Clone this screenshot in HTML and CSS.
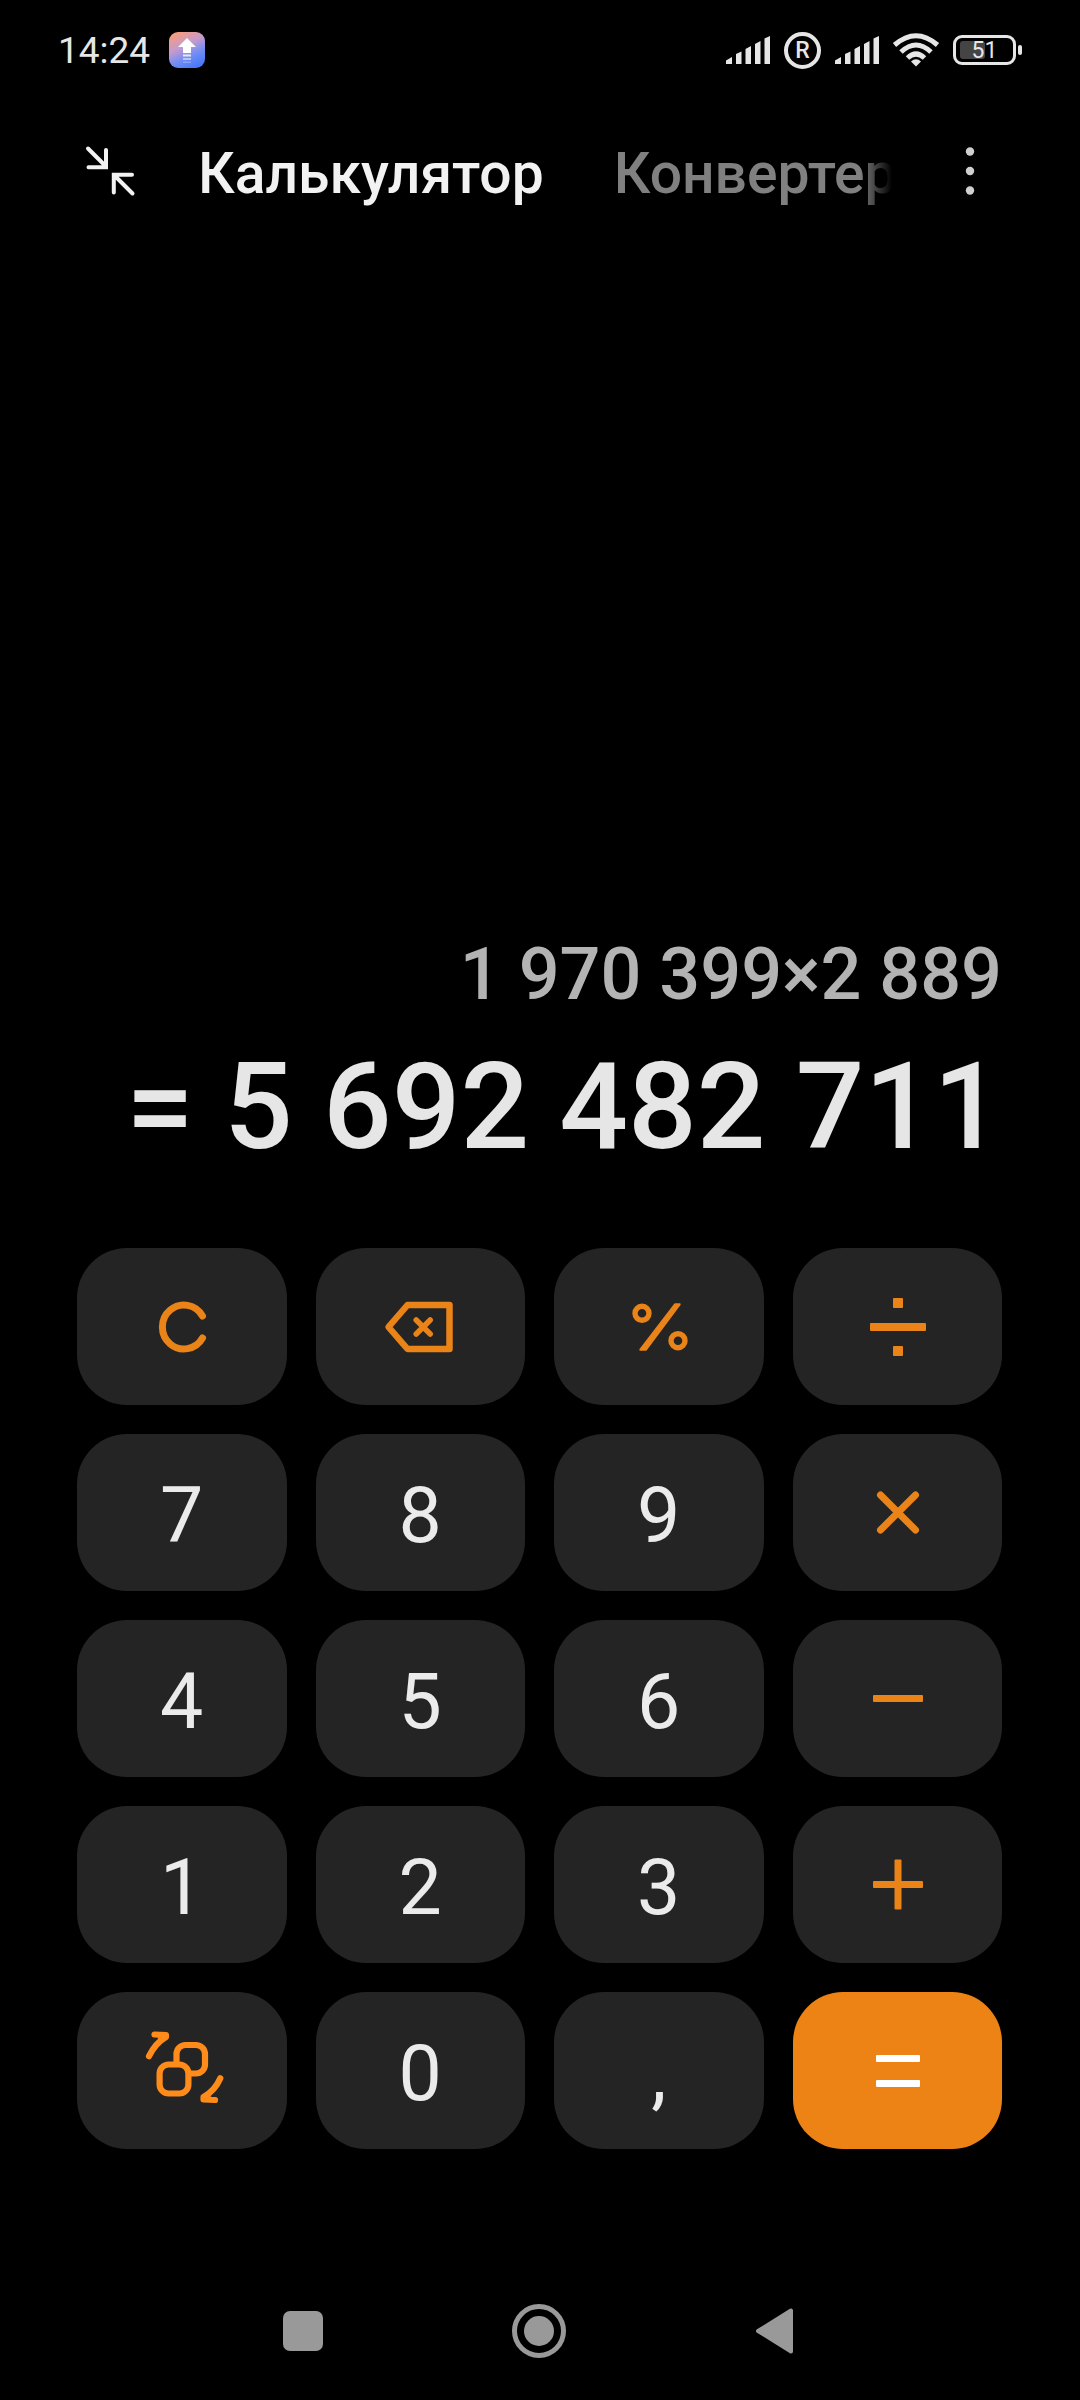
FILE: index.html
```html
<!DOCTYPE html>
<html lang="ru">

<head>
    <meta charset="UTF-8">
    <meta name="viewport" content="width=device-width, initial-scale=1">
    <title>Калькулятор</title>
    <link rel="stylesheet" href="styles.css">
</head>

<body>

    <div class="status-bar">
        <span class="clock">14:24</span>
        <svg class="app-badge" width="36" height="36" viewBox="0 0 36 36">
            <defs>
                <linearGradient id="badge" x1="0.2" y1="0" x2="0.7" y2="1">
                    <stop offset="0" stop-color="#fb9d78" />
                    <stop offset="0.4" stop-color="#c49ad0" />
                    <stop offset="0.7" stop-color="#6f8df5" />
                    <stop offset="1" stop-color="#4a78f8" />
                </linearGradient>
            </defs>
            <rect width="36" height="36" rx="9" fill="url(#badge)" />
            <path d="M18 6L27 15H22V21H14V15H9Z" fill="#fff" />
            <path d="M14 22.500h8v2h-8z" fill="#fff" opacity="0.8" />
            <path d="M14 26h8v2h-8z" fill="#fff" opacity="0.5" />
            <path d="M14 29.500h8v1.500h-8z" fill="#fff" opacity="0.25" />
        </svg>
        <div class="status-icons">
            <svg width="44" height="28" viewBox="0 0 44 28" fill="#e6e6e6">
                <path d="M0 28V24.500L6 21V28ZM10 28V18L15.500 15.500V28ZM19.500 28V13L25 10V28ZM29 28V8L34.500 5V28ZM38.500 28V2.500L44 0V28Z" />
            </svg>
            <span class="roaming">R</span>
            <svg width="44" height="28" viewBox="0 0 44 28" fill="#e6e6e6">
                <path d="M0 28V24.500L6 21V28ZM10 28V18L15.500 15.500V28ZM19.500 28V13L25 10V28ZM29 28V8L34.500 5V28ZM38.500 28V2.500L44 0V28Z" />
            </svg>
            <svg width="46" height="34" viewBox="0 0 46 34" fill="none" stroke="#e6e6e6" stroke-width="5">
                <path d="M1.500 12Q23 -6.500 44.500 12" />
                <path d="M8 19Q23 5 38 19" />
                <path d="M14.500 25Q23 17 31.500 25" />
                <path d="M18 28.500Q23 24 28 28.500L23 33.500Z" fill="#e6e6e6" stroke="none" />
            </svg>
            <div class="battery">
                <div class="battery-body">
                    <div class="battery-level" style="width: 51%"></div>
                    <span class="battery-text">51</span>
                </div>
                <div class="battery-tip"></div>
            </div>
        </div>
    </div>

    <header class="header">
        <button class="icon-button" aria-label="Свернуть">
            <svg width="48" height="48" viewBox="0 0 48 48" fill="none" stroke="#f2f2f2" stroke-width="4" stroke-linecap="round">
                <path d="M2 1.500L20 19.500M20 3V20.200H2.500" />
                <path d="M46.500 46.500L28 28M46 27.800H27.800V45.500" />
            </svg>
        </button>
        <nav class="tabs">
            <button class="tab tab-active">Калькулятор</button>
            <button class="tab">Конвертер</button>
        </nav>
        <button class="icon-button" aria-label="Меню">
            <svg width="60" height="48" viewBox="0 0 60 48" fill="#d0d0d0">
                <circle cx="30" cy="4.500" r="4.200" />
                <circle cx="30" cy="24" r="4.200" />
                <circle cx="30" cy="43.500" r="4.200" />
            </svg>
        </button>
    </header>

    <main class="display">
        <div class="expression">1 970 399×2 889</div>
        <output class="result">= 5 692 482 711</output>
    </main>

    <div class="keypad">
        <button class="key" aria-label="Сброс">
            <svg class="key-icon" viewBox="0 0 80 80" fill="none" stroke="currentColor" stroke-width="7" stroke-linecap="round">
                <path d="M60.500 29A21.500 22 0 1 0 60.500 51" />
            </svg>
        </button>
        <button class="key" aria-label="Удалить">
            <svg class="key-icon" viewBox="0 0 80 80" fill="none" stroke="currentColor" stroke-width="6.500" stroke-linecap="round" stroke-linejoin="round">
                <path d="M8.500 40L27.500 18H69.500V62H27.500Z" />
                <path d="M36.200 33L50.200 47M50.200 33L36.200 47" stroke-width="5.500" />
            </svg>
        </button>
        <button class="key" aria-label="Процент">
            <svg class="key-icon" viewBox="0 0 80 80" fill="none" stroke="currentColor" stroke-width="5.400">
                <circle cx="23" cy="26.300" r="7" />
                <circle cx="59" cy="53.700" r="7" />
                <path d="M56 17.300H60.700L27 62.700H21.300Z" fill="currentColor" stroke-width="2" stroke-linejoin="round" />
            </svg>
        </button>
        <button class="key" aria-label="Разделить">
            <svg class="key-icon" viewBox="0 0 80 80" fill="currentColor">
                <rect x="36" y="11" width="10" height="10" rx="1" />
                <rect x="13" y="36" width="56" height="8" rx="1" />
                <rect x="36" y="59" width="10" height="10" rx="1" />
            </svg>
        </button>

        <button class="key key-digit">7</button>
        <button class="key key-digit">8</button>
        <button class="key key-digit">9</button>
        <button class="key" aria-label="Умножить">
            <svg class="key-icon" viewBox="0 0 80 80" fill="none" stroke="currentColor" stroke-width="7" stroke-linecap="round">
                <path d="M23.500 22L58.500 57M58.500 22L23.500 57" />
            </svg>
        </button>

        <button class="key key-digit">4</button>
        <button class="key key-digit">5</button>
        <button class="key key-digit">6</button>
        <button class="key" aria-label="Вычесть">
            <svg class="key-icon" viewBox="0 0 80 80" fill="currentColor">
                <rect x="16" y="36" width="50" height="7" rx="1" />
            </svg>
        </button>

        <button class="key key-digit">1</button>
        <button class="key key-digit">2</button>
        <button class="key key-digit">3</button>
        <button class="key" aria-label="Сложить">
            <svg class="key-icon" viewBox="0 0 80 80" fill="currentColor">
                <rect x="16" y="36" width="50" height="7" rx="1" />
                <rect x="37.500" y="14.500" width="7" height="50" rx="1" />
            </svg>
        </button>

        <button class="key" aria-label="Научный режим">
            <svg class="key-icon key-icon-bright" viewBox="0 0 80 80" fill="none" stroke="currentColor" stroke-width="6.200" stroke-linecap="round" stroke-linejoin="round">
                <rect x="34.500" y="14" width="28.500" height="28.500" rx="9" />
                <rect x="17.600" y="33.500" width="28.800" height="29" rx="9" fill="#242424" />
                <path d="M12.500 3.500L24 4V6C17 10 11 17 7 25.200M18 5L24 5" />
                <path d="M78.300 47.300C75 55 69 62 61.500 66V68.500L73 69M67 68L62 68" />
            </svg>
        </button>
        <button class="key key-digit">0</button>
        <button class="key key-digit">,</button>
        <button class="key key-equals" aria-label="Равно">
            <svg class="key-icon" viewBox="0 0 80 80" fill="currentColor">
                <rect x="19" y="24" width="44" height="7" rx="1" />
                <rect x="19" y="49" width="44" height="7" rx="1" />
            </svg>
        </button>
    </div>

    <footer class="nav-bar">
        <button class="icon-button" aria-label="Недавние">
            <svg width="54" height="54" viewBox="0 0 54 54" fill="#999">
                <rect x="7" y="7" width="40" height="40" rx="7" />
            </svg>
        </button>
        <button class="icon-button" aria-label="Домой">
            <svg width="54" height="54" viewBox="0 0 54 54" fill="#999">
                <circle cx="27" cy="27" r="24.500" fill="none" stroke="#999" stroke-width="5" />
                <circle cx="27" cy="27" r="15" />
            </svg>
        </button>
        <button class="icon-button" aria-label="Назад">
            <svg width="54" height="54" viewBox="0 0 54 54" fill="#999" stroke="#999" stroke-width="4" stroke-linejoin="round">
                <path d="M10 27L43 6.500V47.500Z" />
            </svg>
        </button>
    </footer>

</body>

</html>
```
FILE: styles.css
```css
* {
    box-sizing: border-box;
}

body {
    margin: 0;
    min-height: 100vh;
    display: flex;
    flex-direction: column;
    background-color: #000;
    color: #e6e6e6;
    font-family: Roboto, "Liberation Sans", sans-serif;
}

button {
    padding: 0;
    border: none;
    background: none;
    color: inherit;
    font-family: inherit;
    cursor: pointer;
}

svg {
    display: block;
    flex-shrink: 0;
    overflow: visible;
}

/* status bar */

.status-bar {
    height: 100px;
    padding: 0 58px;
    display: flex;
    align-items: center;
}

.clock {
    padding-top: 2px;
    font-size: 37px;
    line-height: 48px;
}

.app-badge {
    margin-left: 19px;
}

.status-icons {
    margin-left: auto;
    display: flex;
    align-items: center;
    gap: 14px;
}

.roaming {
    width: 37px;
    height: 37px;
    border: 4px solid #e6e6e6;
    border-radius: 50%;
    font-size: 23px;
    font-weight: 500;
    line-height: 30px;
    text-align: center;
}

.battery {
    display: flex;
    align-items: center;
    gap: 2px;
}

.battery-body {
    position: relative;
    width: 63px;
    height: 30px;
    padding: 3px 4px;
    border: 3px solid #e6e6e6;
    border-radius: 9px;
}

.battery-level {
    height: 100%;
    border-radius: 3px;
    background-color: #444;
}

.battery-text {
    position: absolute;
    inset: 0;
    font-size: 23px;
    line-height: 26px;
    text-align: center;
}

.battery-tip {
    width: 4px;
    height: 10px;
    border-radius: 2px;
    background-color: #e6e6e6;
}

/* header */

.header {
    height: 142px;
    padding: 0 80px 0 86px;
    display: flex;
    align-items: center;
}

.icon-button {
    display: flex;
    align-items: center;
    justify-content: center;
}

.tabs {
    flex: 1;
    min-width: 0;
    margin: 0 48px 0 64px;
    padding-top: 5px;
    display: flex;
    gap: 70px;
    overflow: hidden;
    -webkit-mask-image: linear-gradient(to left, transparent, #000 32px);
    mask-image: linear-gradient(to left, transparent, #000 32px);
}

.tab {
    color: #808080;
    font-size: 57px;
    font-weight: 500;
    line-height: 76px;
    white-space: nowrap;
}

.tab-active {
    color: #f2f2f2;
}

/* display */

.display {
    flex: 1;
    padding: 0 78px 70px 77px;
    display: flex;
    flex-direction: column;
    justify-content: flex-end;
    gap: 16px;
    font-weight: 500;
    text-align: right;
    white-space: nowrap;
}

.expression {
    color: #b3b3b3;
    font-size: 72px;
    line-height: 90px;
}

.result {
    font-size: 121px;
    line-height: 142px;
}

/* keypad */

.keypad {
    padding: 0 78px 0 77px;
    display: grid;
    grid-template-columns: repeat(4, 1fr);
    gap: 29px;
}

.key {
    height: 157px;
    display: flex;
    align-items: center;
    justify-content: center;
    border-radius: 50px;
    background-color: #242424;
    color: #ebebeb;
    font-size: 77px;
    line-height: 90px;
}

.key-digit {
    padding-top: 6px;
}

.key-icon {
    width: 80px;
    height: 80px;
    color: #ea8318;
}

.key-icon-bright {
    color: #ff8b1a;
}

.key-equals {
    background-color: #ed8314;
}

.key-equals .key-icon {
    color: #fff;
}

/* system navigation */

.nav-bar {
    height: 138px;
    margin-top: 113px;
    padding: 0 187px 0 185px;
    display: grid;
    grid-template-columns: repeat(3, 1fr);
}
```
